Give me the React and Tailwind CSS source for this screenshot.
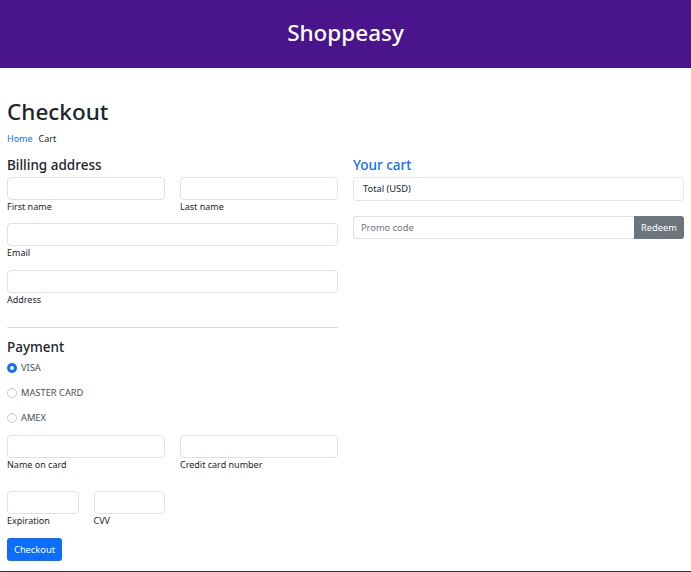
import React from 'react';

const Field = ({ label, className = '' }) => (
    <div className={`flex flex-col ${className}`}>
        <input className="h-[23px] w-full rounded-[4px] border border-[#dee2e6] bg-white px-2 text-[11px] outline-none" />
        <label className="pt-[1px] text-[9px] leading-[12px] text-[#212529]">{label}</label>
    </div>
);

const Radio = ({ label, checked }) => (
    <label className="flex h-[25px] items-center gap-[4px] text-[9.3px] text-[#495057]">
        {checked ? (
            <span className="flex h-[10px] w-[10px] items-center justify-center rounded-full bg-[#0d6efd]">
                <span className="h-[4px] w-[4px] rounded-full bg-white" />
            </span>
        ) : (
            <span className="h-[10px] w-[10px] rounded-full border border-[#c7ccd1] bg-white" />
        )}
        <span>{label}</span>
    </label>
);

export default function App() {
    return (
        <div className="min-h-[572px] bg-white font-['Noto_Sans',sans-serif] text-[#212529]">
            {/* Header */}
            <header className="flex h-[68px] items-center justify-center bg-[#4a148c] pb-[3px]">
                <h1 className="text-[22.5px] font-medium text-white">Shoppeasy</h1>
            </header>

            <div className="px-[7px] pt-[28px]">
                <h2 className="text-[22.5px] font-medium leading-[32px]">Checkout</h2>
                <div className="mt-[5px] flex gap-[6px] text-[9px] leading-[12px]">
                    <span className="text-[#0d6efd]">Home</span>
                    <span>Cart</span>
                </div>

                <div className="mt-[11px] flex gap-[15px]">
                    {/* Billing / payment */}
                    <div className="w-[331px]">
                        <h3 className="text-[13.5px] font-medium leading-[18px]">Billing address</h3>
                        <div className="mt-[3px] grid grid-cols-2 gap-x-[15px]">
                            <Field label="First name" />
                            <Field label="Last name" />
                        </div>
                        <Field label="Email" className="mt-[10px]" />
                        <Field label="Address" className="mt-[11px]" />

                        <hr className="mt-[21px] border-t border-[#dcdcdc]" />

                        <h3 className="mt-[10px] text-[13.5px] font-medium leading-[18px]">Payment</h3>
                        <div className="-mt-[1px] flex flex-col">
                            <Radio label="VISA" checked />
                            <Radio label="MASTER CARD" />
                            <Radio label="AMEX" />
                        </div>

                        <div className="mt-[5px] grid grid-cols-2 gap-x-[15px]">
                            <Field label="Name on card" />
                            <Field label="Credit card number" />
                        </div>
                        <div className="mt-[20px] grid grid-cols-4 gap-x-[15px]">
                            <Field label="Expiration" />
                            <Field label="CVV" />
                        </div>
                        <button className="mt-[11px] h-[23px] rounded-[3px] bg-[#0d6efd] px-[7px] text-[9.3px] text-white">
                            Checkout
                        </button>
                    </div>

                    {/* Cart */}
                    <div className="w-[331px]">
                        <h3 className="text-[13.5px] font-medium leading-[18px] text-[#0d6efd]">Your cart</h3>
                        <div className="mt-[3px] flex h-[24px] items-center rounded-[3px] border border-[#e5e7eb] px-[9px] text-[9.3px]">
                            Total (USD)
                        </div>
                        <div className="mt-[15px] flex h-[23px]">
                            <input
                                placeholder="Promo code"
                                className="min-w-0 flex-1 rounded-l-[3px] border border-r-0 border-[#dee2e6] px-[7px] text-[9.3px] outline-none placeholder:text-[#6c757d]"
                            />
                            <button className="w-[50px] rounded-r-[3px] bg-[#6c757d] text-[9.3px] text-white">Redeem</button>
                        </div>
                    </div>
                </div>
            </div>
            <div className="mt-[10px] h-[2px] bg-[#333]" />
        </div>
    );
}
